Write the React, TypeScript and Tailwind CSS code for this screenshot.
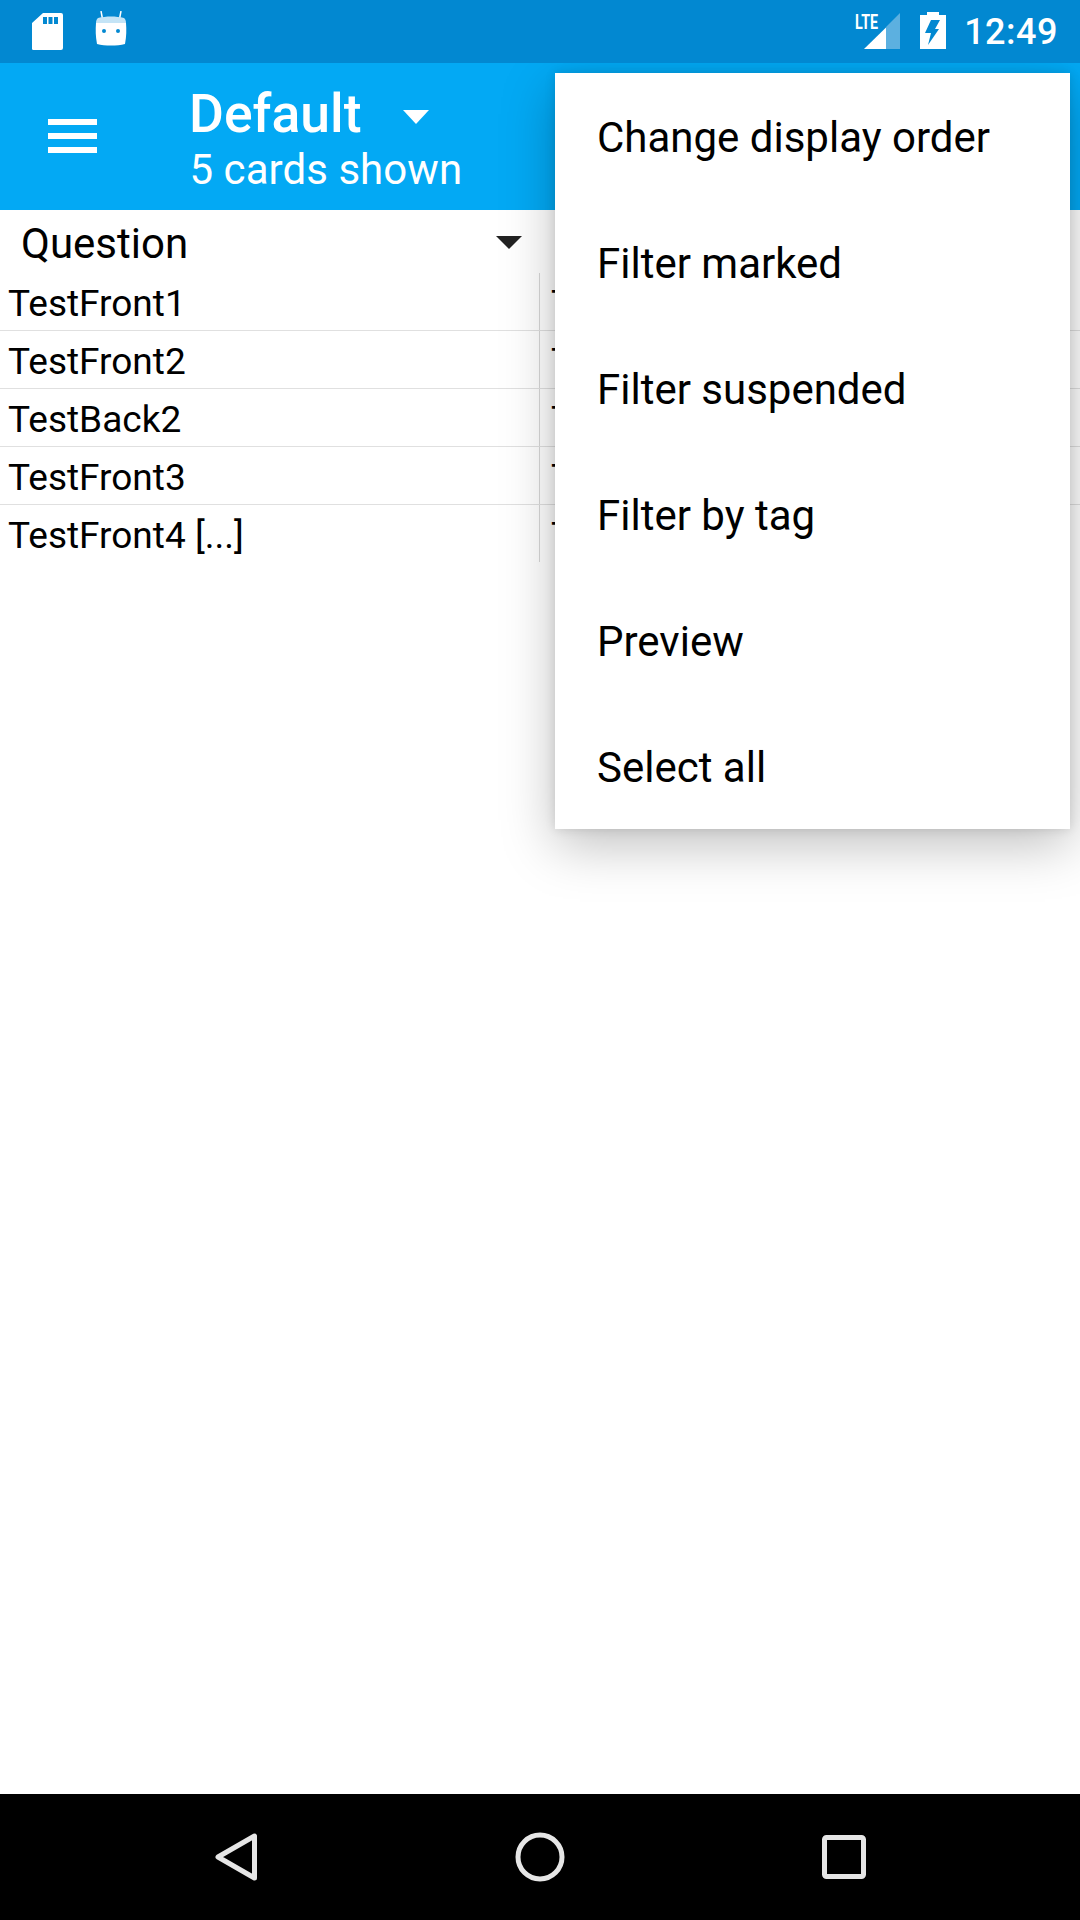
const font = { fontFamily: "Roboto, sans-serif" };

const rows = [
  ["TestFront1", "TestBack1"],
  ["TestFront2", "TestBack2"],
  ["TestBack2", "TestFront2"],
  ["TestFront3", "TestBack3"],
  ["TestFront4 [...]", "TestBack4"],
];
const items = ["Change display order", "Filter marked", "Filter suspended", "Filter by tag", "Preview", "Select all"];

function StatusBar() {
  return (
    <div className="relative z-10 h-[63px] bg-[#0288d1] flex justify-between shrink-0 text-white">
      <div className="flex pl-[32px] gap-[32px]">
        <svg width="31" height="37" viewBox="0 0 31 37" className="mt-[13px]">
          <path fill="#fff" fillRule="evenodd" d="M11 0h18a2 2 0 0 1 2 2v33a2 2 0 0 1-2 2H3a2 2 0 0 1-3-2V10z M11 4v7h4V4z M16.500 4v7h4V4z M22 4v7h4V4z" />
        </svg>
        <svg width="32" height="36" viewBox="0 0 32 36" className="mt-[11px]">
          <path d="M6 0l1.500 8M26 0l-1.500 8" stroke="#fff" strokeWidth="1.500" fill="none" />
          <path fill="#c4e4f6" d="M3 7c8-2 18-2 26 0 1.500 1 2 3 2 5H1c0-2 .5-4 2-5z" />
          <path fill="#fff" fillRule="evenodd" d="M1 12h30c.5 7 .5 13-1 21-8 2-20 2-28 0C.5 25 .5 19 1 12z M9 18a2 2 0 1 0 0 4 2 2 0 0 0 0-4z M23 18a2 2 0 1 0 0 4 2 2 0 0 0 0-4z" />
        </svg>
      </div>
      <div className="flex pr-[22px]">
        <div className="relative w-[46px] h-[38px] mt-[12px] mr-[20px]">
          <span className="absolute left-[1px] top-[1px] text-[21px] font-bold leading-[18px] scale-x-[0.68] origin-left" style={font}>LTE</span>
          <svg width="46" height="38" viewBox="0 0 46 38" className="absolute left-0 top-0">
            <path fill="#5cb0e0" d="M46 1v36H32V15z" />
            <path fill="#fff" d="M32 15.500V37H10z" />
          </svg>
        </div>
        <svg width="26" height="37" viewBox="0 0 26 37" className="mt-[12px] mr-[18px]">
          <path fill="#fff" fillRule="evenodd" d="M7 0h12v3h7v34H0V3h7z M11 8h9l-5 9h4L8 33l3-12H5z" />
        </svg>
        <span className="text-[36px] font-medium leading-none tracking-[0.5px] mt-[14px]" style={font}>12:49</span>
      </div>
    </div>
  );
}

function AppBar() {
  return (
    <div className="h-[147px] bg-[#03a9f4] flex shrink-0 text-white">
      <div className="w-[189px] shrink-0 pl-[48px] pt-[56px]">
        <div className="w-[49px] h-[34px] flex flex-col justify-between">
          <div className="h-[6px] bg-white" />
          <div className="h-[6px] bg-white" />
          <div className="h-[6px] bg-white" />
        </div>
      </div>
      <div className="flex flex-col">
        <div className="flex items-center h-[60px] mt-[21px]">
          <span className="text-[53.5px] font-medium leading-none" style={font}>Default</span>
          <svg width="26" height="14" viewBox="0 0 26 14" className="ml-[41px] mt-[6px]">
            <path fill="#fff" d="M0 0h26L13 14z" />
          </svg>
        </div>
        <span className="text-[42px] leading-none mt-[5px] ml-[0.5px] tracking-[0.05px]" style={font}>5 cards shown</span>
      </div>
    </div>
  );
}

function Table() {
  return (
    <div className="flex-1 bg-white text-black" style={font}>
      <div className="flex h-[63px]">
        <div className="w-[540px] relative flex items-center pl-[21px] pt-[4px]">
          <span className="text-[42px] leading-none text-black">Question</span>
          <svg width="28" height="14" viewBox="0 0 28 14" className="absolute left-[495px] top-[25px]">
            <path fill="#222" d="M1 1h26L14 14z" />
          </svg>
        </div>
      </div>
      {rows.map(([q, a], i) => (
        <div key={q} className={`flex ${i < rows.length - 1 ? "h-[58px] border-b border-[#e0e0e0]" : "h-[57px]"}`}>
          <div className="w-[540px] border-r border-[#d8d8d8] pl-[8px] pt-[4px] flex items-center text-[37px] leading-none whitespace-nowrap">{q}</div>
          <div className="pl-[11px] pt-[4px] flex items-center text-[37px] leading-none whitespace-nowrap">{a}</div>
        </div>
      ))}
    </div>
  );
}

function Menu() {
  return (
    <div className="absolute left-[555px] top-[73px] w-[515px] h-[756px] bg-white shadow-[0_16px_50px_rgba(0,0,0,0.25),0_0_10px_rgba(0,0,0,0.12)]">
      {items.map((t) => (
        <div key={t} className="h-[126px] flex items-center pl-[42px] pt-[4px] text-[42px] leading-none text-black" style={font}>{t}</div>
      ))}
    </div>
  );
}

function NavBar() {
  return (
    <div className="relative z-10 h-[126px] bg-black shrink-0">
      <svg width="1080" height="126" viewBox="0 0 1080 126">
        <path d="M254.500 42 V84 L218 63 Z" fill="none" stroke="#e6e6e6" strokeWidth="5" strokeLinejoin="round" />
        <circle cx="540" cy="63" r="22" fill="none" stroke="#e6e6e6" strokeWidth="5" />
        <rect x="824.500" y="43.500" width="39" height="39" rx="2" fill="none" stroke="#e6e6e6" strokeWidth="5" />
      </svg>
    </div>
  );
}

export default function App() {
  return (
    <div className="relative w-[1080px] h-[1920px] overflow-hidden flex flex-col bg-white">
      <StatusBar />
      <AppBar />
      <Table />
      <NavBar />
      <Menu />
    </div>
  );
}
